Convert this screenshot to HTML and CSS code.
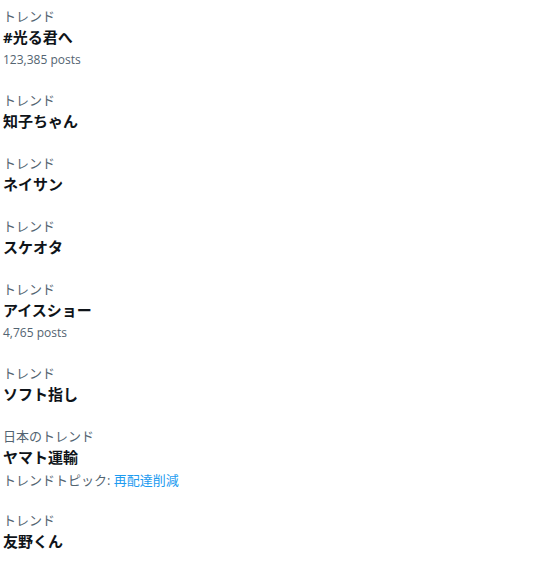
FILE: index.html
```html
<!DOCTYPE html>
<html lang="ja">
<head>
    <meta charset="UTF-8">
    <meta name="viewport" content="width=device-width, initial-scale=1.0">
    <title>トレンド</title>
    <link rel="stylesheet" href="styles.css">
</head>
<body>
    <div class="trends">
        <div class="trend">
            <div class="trend-label">トレンド</div>
            <div class="trend-name">#光る君へ</div>
            <div class="trend-meta">123,385 posts</div>
        </div>
        <div class="trend">
            <div class="trend-label">トレンド</div>
            <div class="trend-name">知子ちゃん</div>
        </div>
        <div class="trend">
            <div class="trend-label">トレンド</div>
            <div class="trend-name">ネイサン</div>
        </div>
        <div class="trend">
            <div class="trend-label">トレンド</div>
            <div class="trend-name">スケオタ</div>
        </div>
        <div class="trend">
            <div class="trend-label">トレンド</div>
            <div class="trend-name">アイスショー</div>
            <div class="trend-meta">4,765 posts</div>
        </div>
        <div class="trend">
            <div class="trend-label">トレンド</div>
            <div class="trend-name">ソフト指し</div>
        </div>
        <div class="trend">
            <div class="trend-label">日本のトレンド</div>
            <div class="trend-name">ヤマト運輸</div>
            <div class="trend-meta topic-line">トレンドトピック: <a class="topic" href="#">再配達削減</a></div>
        </div>
        <div class="trend">
            <div class="trend-label">トレンド</div>
            <div class="trend-name">友野くん</div>
        </div>
    </div>
</body>
</html>
```

FILE: styles.css
```css
body {
    font-family: "Open Sans", "Noto Sans CJK JP", sans-serif;
    background-color: #ffffff;
    color: #0f1419;
    margin: 0;
    padding: 0;
}
.trends {
    display: flex;
    flex-direction: column;
    gap: 21px;
    padding: 6px 3px;
}
.trend-label {
    font-size: 13px;
    line-height: 20px;
    color: #536471;
}
.trend-name {
    font-size: 15px;
    line-height: 22px;
    font-weight: bold;
}
.trend-meta {
    font-size: 12px;
    line-height: 18px;
    padding-top: 3px;
    color: #536471;
}
.topic-line {
    font-size: 13px;
}
.topic {
    color: #1d9bf0;
    text-decoration: none;
}
```
